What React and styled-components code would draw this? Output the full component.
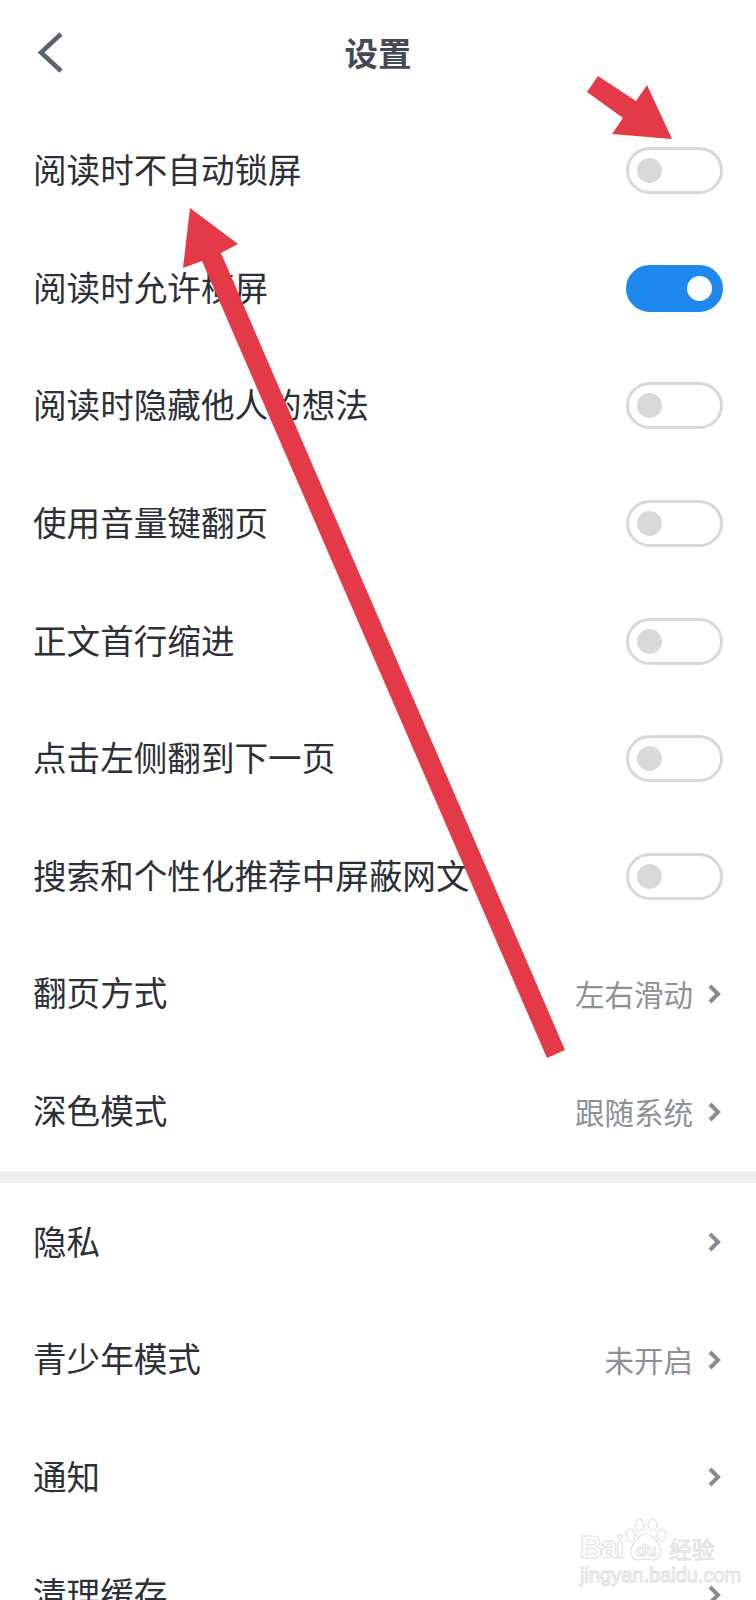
import React from "react";
import styled, { createGlobalStyle } from "styled-components";

const GlobalStyle = createGlobalStyle`
  html, body {
    margin: 0;
    padding: 0;
    background: #fff;
  }
`;

const Page = styled.div`
  position: relative;
  width: 756px;
  height: 1600px;
  overflow: hidden;
  background: #fff;
  font-family: "Noto Sans CJK SC", "Noto Sans", sans-serif;
  color: #2c3038;
`;

const Header = styled.header`
  height: 112px;
  box-sizing: border-box;
  padding: 0 0 8px 36px;
  display: grid;
  grid-template-columns: 1fr auto 1fr;
  align-items: center;
  margin-right: 36px;
`;

const BackButton = styled.svg`
  width: 30px;
  height: 46px;
  fill: none;
  stroke: #5b636e;
  stroke-width: 4.5;
`;

const Title = styled.h1`
  margin: 0;
  font-size: 33.5px;
  line-height: 46px;
  font-weight: 700;
  color: #444a54;
`;

const Row = styled.div`
  height: 117.6px;
  padding: 0 33px;
  box-sizing: border-box;
  display: flex;
  align-items: center;
  justify-content: space-between;
`;

const Label = styled.span`
  font-size: 33.6px;
  line-height: 46px;
  margin-bottom: 3px;
  white-space: nowrap;
`;

const Switch = styled.div`
  width: 97px;
  height: 47px;
  border-radius: 24px;
  box-sizing: border-box;
  border: 3px solid ${(p) => (p.$on ? "#1e88ee" : "#d8d8d8")};
  background: ${(p) => (p.$on ? "#1e88ee" : "#fff")};
  display: flex;
  align-items: center;
  justify-content: ${(p) => (p.$on ? "flex-end" : "flex-start")};
  padding: 0 8px;
`;

const Knob = styled.div`
  width: 25px;
  height: 25px;
  border-radius: 50%;
  background: ${(p) => (p.$on ? "#fff" : "#d9d9d9")};
`;

const Action = styled.div`
  display: flex;
  align-items: center;
  gap: 14px;
`;

const Value = styled.span`
  font-size: 29.5px;
  line-height: 40px;
  margin-bottom: 2px;
  color: #8b9099;
  white-space: nowrap;
`;

const Chevron = styled.svg`
  width: 15px;
  height: 22px;
  fill: none;
  stroke: #858a93;
  stroke-width: 4;
  margin-right: 1px;
`;

const Divider = styled.div`
  height: 12px;
  margin-top: 1px;
  background: #eceeef;
`;

const ArrowLayer = styled.svg`
  position: absolute;
  left: 0;
  top: 0;
  width: 756px;
  height: 1600px;
  pointer-events: none;
`;

const Watermark = styled.div`
  position: absolute;
  left: 580px;
  top: 1518px;
  display: flex;
  flex-direction: column;
  gap: 5px;
  color: #fff;
  -webkit-text-stroke: 1px #e0e0e0;
  font-family: "Liberation Sans", sans-serif;
`;

const LogoLine = styled.div`
  display: flex;
  align-items: flex-end;
`;

const BaiText = styled.span`
  font-size: 31px;
  line-height: 26px;
  font-weight: 700;
  letter-spacing: -2px;
  margin-right: 3px;
`;

const PawBox = styled.div`
  display: grid;
  justify-items: center;
  align-items: end;
  width: 42px;
  height: 43px;
`;

const Paw = styled.svg`
  grid-area: 1 / 1;
  width: 42px;
  height: 43px;
  fill: #fff;
  stroke: #e0e0e0;
  stroke-width: 1.2;
`;

const DuText = styled.span`
  grid-area: 1 / 1;
  position: relative;
  font-size: 17px;
  line-height: 20px;
  font-weight: 700;
`;

const JingText = styled.span`
  font-family: "Noto Sans CJK SC", sans-serif;
  font-size: 22.5px;
  line-height: 26px;
  margin-left: 2px;
  white-space: nowrap;
`;

const DomainText = styled.span`
  font-size: 20px;
  line-height: 18px;
  white-space: nowrap;
`;

const groups = [
  [
    { label: "阅读时不自动锁屏", on: false },
    { label: "阅读时允许横屏", on: true },
    { label: "阅读时隐藏他人的想法", on: false },
    { label: "使用音量键翻页", on: false },
    { label: "正文首行缩进", on: false },
    { label: "点击左侧翻到下一页", on: false },
    { label: "搜索和个性化推荐中屏蔽网文", on: false },
    { label: "翻页方式", value: "左右滑动" },
    { label: "深色模式", value: "跟随系统" },
  ],
  [
    { label: "隐私", value: "" },
    { label: "青少年模式", value: "未开启" },
    { label: "通知", value: "" },
    { label: "清理缓存", value: "" },
  ],
];

function SettingRow({ item }) {
  return (
    <Row>
      <Label>{item.label}</Label>
      {item.value === undefined ? (
        <Switch $on={item.on}>
          <Knob $on={item.on} />
        </Switch>
      ) : (
        <Action>
          {item.value && <Value>{item.value}</Value>}
          <Chevron viewBox="0 0 15 22">
            <path d="M3 3l8 8-8 8" />
          </Chevron>
        </Action>
      )}
    </Row>
  );
}

export default function App() {
  return (
    <Page>
      <GlobalStyle />
      <Header>
        <BackButton viewBox="0 0 30 46">
          <path d="M25 5L5 23.5 25 42" />
        </BackButton>
        <Title>设置</Title>
      </Header>
      {groups[0].map((item) => (
        <SettingRow key={item.label} item={item} />
      ))}
      <Divider />
      {groups[1].map((item) => (
        <SettingRow key={item.label} item={item} />
      ))}

      <ArrowLayer viewBox="0 0 756 1600">
        <polygon
          fill="#e43a48"
          points="598,76 636,101 647,85 672,139 612,134 623,118 587,92"
        />
        <polygon
          fill="#e43a48"
          points="190,208 238,244 221,253 565,1050 547,1058 202,261 183,268"
        />
      </ArrowLayer>

      <Watermark>
        <LogoLine>
          <BaiText>Bai</BaiText>
          <PawBox>
            <Paw viewBox="0 0 42 43">
              <ellipse cx="5.5" cy="17" rx="4.5" ry="6" />
              <ellipse cx="14.5" cy="7" rx="4.5" ry="6" />
              <ellipse cx="27.5" cy="7" rx="4.5" ry="6" />
              <ellipse cx="36.5" cy="17" rx="4.5" ry="6" />
              <path d="M21 16c6 0 9 5 12 9 5 6 4 17-5 17-3 0-4-1-7-1s-4 1-7 1C5 42 4 31 9 25c3-4 6-9 12-9z" />
            </Paw>
            <DuText>du</DuText>
          </PawBox>
          <JingText>经验</JingText>
        </LogoLine>
        <DomainText>jingyan.baidu.com</DomainText>
      </Watermark>
    </Page>
  );
}
